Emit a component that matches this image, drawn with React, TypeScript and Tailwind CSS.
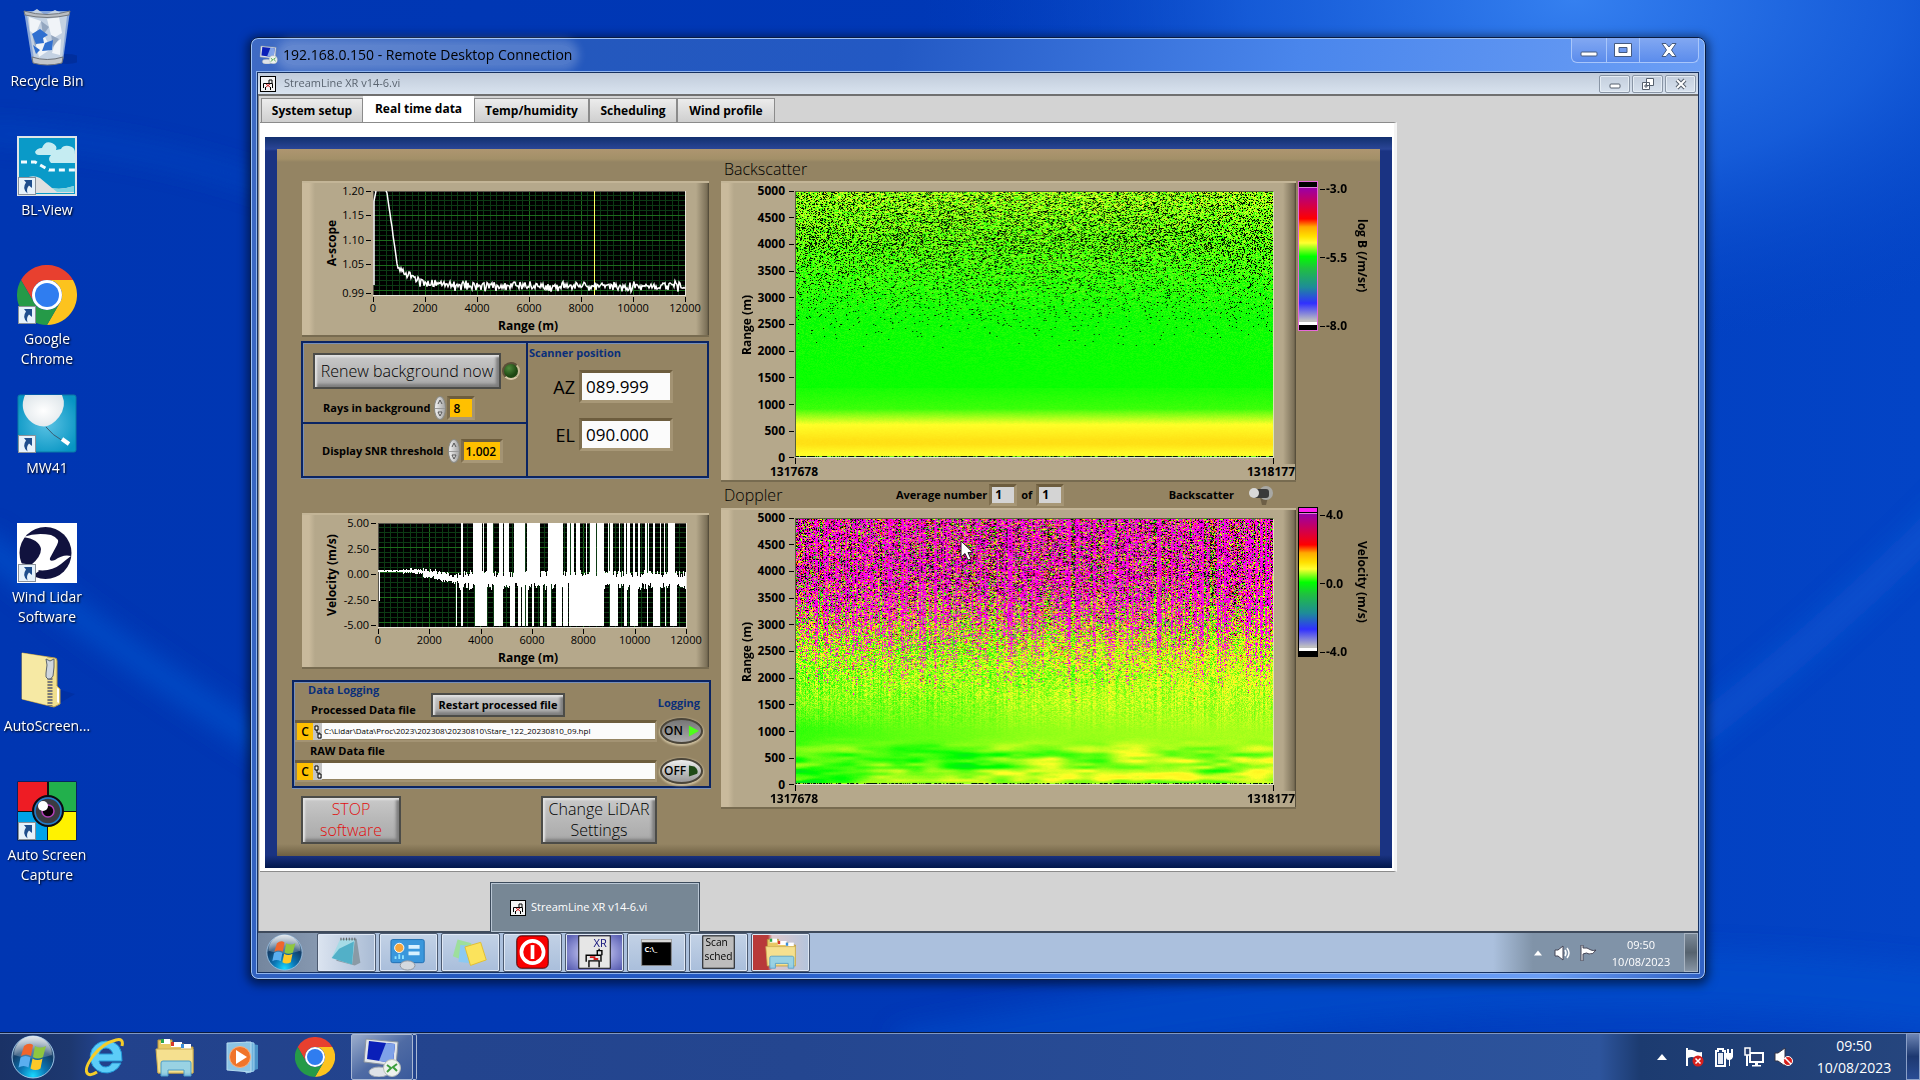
import { useEffect, useRef } from 'react'
import type { ReactNode } from 'react'

const makeRandom = (seed: number) => {
    let s = seed
    return () => {
        s = (s * 1664525 + 1013904223) % 4294967296
        return s / 4294967296
    }
}

type Rgb = [number, number, number]

// 0 = white end of the scale, 1 = purple end
const STOPS: [number, Rgb][] = [
    [0, [190, 190, 190]],
    [0.13, [50, 50, 255]],
    [0.3, [30, 130, 150]],
    [0.48, [0, 255, 0]],
    [0.6, [255, 255, 40]],
    [0.72, [255, 190, 0]],
    [0.8, [255, 0, 0]],
    [1, [150, 0, 170]],
]

const scaleColor = (v: number): Rgb => {
    const t = Math.max(0, Math.min(1, v))
    for (let i = 1; i < STOPS.length; i++) {
        if (t <= STOPS[i][0]) {
            const [a, ca] = STOPS[i - 1]
            const [b, cb] = STOPS[i]
            const f = (t - a) / (b - a)
            return [0, 1, 2].map((k) => ca[k] + (cb[k] - ca[k]) * f) as Rgb
        }
    }
    return STOPS[STOPS.length - 1][1]
}

const ramp = (x: number, a: number, b: number) => Math.max(0, Math.min(1, (x - a) / (b - a)))

const hash = (x: number, y: number) => {
    const n = Math.sin(x * 127.1 + y * 311.7) * 43758.5453
    return n - Math.floor(n)
}

// smooth lattice noise, -0.5 to 0.5
const smooth = (x: number, y: number) => {
    const x0 = Math.floor(x)
    const y0 = Math.floor(y)
    const fx = (x - x0) * (x - x0) * (3 - 2 * (x - x0))
    const fy = (y - y0) * (y - y0) * (3 - 2 * (y - y0))
    const top = hash(x0, y0) * (1 - fx) + hash(x0 + 1, y0) * fx
    const bottom = hash(x0, y0 + 1) * (1 - fx) + hash(x0 + 1, y0 + 1) * fx
    return top * (1 - fy) + bottom * fy - 0.5
}

const backscatterCell = (h: number, rnd: () => number): Rgb => {
    const drop = h > 3900 ? 0.27 - ramp(h, 4300, 5000) * 0.08 : Math.pow(ramp(h, 1900, 4000), 2) * 0.27
    if (rnd() < drop) return [0, 20, 0]
    if (h < 10) return rnd() < 0.6 ? [0, 30, 0] : [120, 255, 30]
    const noise = (rnd() - 0.5) * (0.008 + ramp(h, 1500, 5000) * 0.1)
    if (h < 1300) {
        const body = 0.49 + 0.02 * (1 - ramp(h, 850, 1300)) + 0.09 * (1 - ramp(h, 600, 900)) + 0.055 * (1 - ramp(h, 300, 600)) - 0.05 * (1 - ramp(h, 60, 230))
        return scaleColor(body + noise)
    }
    return scaleColor(0.485 + ramp(h, 2600, 5000) * 0.07 + noise)
}

const dopplerCell = (x: number, h: number, rnd: () => number, column: number): Rgb => {
    if (h < 10) return rnd() < 0.6 ? [0, 30, 0] : [160, 255, 30]
    const noisy = Math.pow(ramp(h + column * 1000, 2000, 3500), 1.3)
    const magenta = Math.max(0.12, Math.min(0.9, 0.52 + column * 0.8))
    const r = rnd()
    if (r < noisy * magenta) return rnd() < 0.88 ? [255, 0, 240] : [190, 0, 140]
    if (r < noisy * 0.94) {
        if (rnd() < 0.42 * ramp(h, 2600, 3900)) return [10, 0, 10]
        return scaleColor(0.4 + rnd() * 0.5)
    }
    const spread = 0.008 + ramp(h, 1000, 2800) * 0.2
    const low = 1 - ramp(h, 450, 900)
    const base = 0.52 + ramp(x, 0, 480) * 0.035 + ramp(h, 1000, 2200) * 0.04
    const cloud = smooth(x / 42, h / 110) * 0.12 + smooth(x / 17, h / 60) * 0.06
    const broad = smooth(x / 130, h / 500) * 0.04
    return scaleColor(base + cloud * low + broad + (rnd() - 0.5) * spread + column * 0.06 * ramp(h, 900, 1900))
}

const HeatMap = ({ kind }: { kind: 'backscatter' | 'doppler' }) => {
    const ref = useRef<HTMLCanvasElement>(null)

    useEffect(() => {
        const ctx = ref.current?.getContext('2d')
        if (!ctx) return
        const w = 476
        const hgt = 265
        const rnd = makeRandom(kind === 'doppler' ? 77 : 12)
        const columns = Array.from({ length: w }, () => rnd() - 0.5)
        const image = ctx.createImageData(w, hgt)
        for (let y = 0; y < hgt; y++) {
            const h = ((hgt - 1 - y) / hgt) * 5000
            for (let x = 0; x < w; x++) {
                const c = kind === 'doppler' ? dopplerCell(x, h, rnd, columns[x]) : backscatterCell(h, rnd)
                const i = (y * w + x) * 4
                image.data[i] = c[0]
                image.data[i + 1] = c[1]
                image.data[i + 2] = c[2]
                image.data[i + 3] = 255
            }
        }
        ctx.putImageData(image, 0, 0)
    }, [kind])

    return <canvas ref={ref} width={476} height={265} className="block h-[265px] w-full min-w-0" />
}

const PANEL =
    'border-t-2 border-b-2 border-t-[#c3b597] border-b-[#776b50] bg-[linear-gradient(to_right,#c9ba9c_0,#c9ba9c_7px,#b5a88b_13px,#b5a88b_calc(100%-13px),#7a6f57_calc(100%-2px),#4b4433_100%)]'

const RANGES = ['5000', '4500', '4000', '3500', '3000', '2500', '2000', '1500', '1000', '500', '0']

const HeatPanel = ({ kind }: { kind: 'backscatter' | 'doppler' }) => (
    <div className={`${PANEL} flex flex-col pt-2`}>
        <div className="flex pr-[22px] pl-4">
            <div className="flex w-5 items-center justify-center">
                <span className="rotate-180 text-xs font-bold whitespace-nowrap [writing-mode:vertical-rl]">Range (m)</span>
            </div>
            <div className="-my-2 flex w-[37px] flex-col justify-between">
                {RANGES.map((r) => (
                    <div key={r} className="flex h-4 items-center justify-end gap-1 text-xs font-bold">
                        {r}
                        <span className="h-px w-[5px] bg-black" />
                    </div>
                ))}
            </div>
            <div className="ml-px min-w-0 flex-1 border border-t-[#55603a] border-r-[#d9e8b0] border-b-[#e8e4d0] border-l-[#55603a]">
                <HeatMap kind={kind} />
            </div>
        </div>
        <div className="flex justify-between pr-[22px] pl-[74px]">
            <span className="h-[6px] w-px bg-black" />
            <span className="h-[6px] w-px bg-black" />
        </div>
        <div className="flex h-4 justify-between pr-px pl-[49px] text-xs leading-4 font-bold">
            <span>1317678</span>
            <span className="bg-[#b5a88b]">1318177</span>
        </div>
    </div>
)

const Grid = ({ x, y, w, h }: { x: number; y: number; w: number; h: number }) => (
    <g shapeRendering="crispEdges">
        <rect x={x} y={y} width={w} height={h} fill="#000" />
        {Array.from({ length: 48 }, (_, i) => (
            <path key={`v${i}`} d={`M${x + (i * w) / 48} ${y}v${h}`} stroke={i % 8 === 0 ? '#1c6a1c' : '#0c3a14'} />
        ))}
        {Array.from({ length: 21 }, (_, i) => (
            <path key={`h${i}`} d={`M${x} ${y + (i * h) / 21}h${w}`} stroke={i % 5 === 0 ? '#1c6a1c' : '#0c3a14'} />
        ))}
        <path d={`M${x} ${y + h}V${y}h${w}`} fill="none" stroke="#55524a" />
        <path d={`M${x} ${y + h}h${w}V${y}`} fill="none" stroke="#e8e4d8" />
    </g>
)

const aScopePath = () => {
    const rnd = makeRandom(5)
    let d = 'M72 104V20L74 10M84 10'
    for (let i = 0; i < 299; i++) {
        const x = 85 + i
        let y = 105
        if (i < 11) y = 12 + i * 7
        else if (i < 60) y = 105 - 20 * Math.exp(-(i - 11) / 15)
        d += `L${x} ${(y + (rnd() + rnd() - 1) * (i < 11 ? 2 : 6)).toFixed(1)}`
    }
    return d
}

const velocityPath = () => {
    const rnd = makeRandom(23)
    let d = ''
    let up = false
    let down = false
    for (let i = 0; i < 308; i++) {
        const x = 76.5 + i
        const mid = i < 40 ? 58 : i < 80 ? 58 + (i - 40) * 0.22 : 67
        const amp = i < 25 ? 1 : i < 45 ? 2 : i < 80 ? 4 : 7
        let top = mid - amp * (0.4 + rnd())
        let bottom = mid + amp * (0.4 + rnd())
        if (i === 1) bottom = 88
        if (i === 78) bottom = 113
        if (i === 83 || i === 84) {
            top = 10
            bottom = 113
        }
        if (i > 92 && i < 302) {
            if (rnd() < 0.5) up = rnd() < (i > 235 ? 0.48 : 0.64)
            if (rnd() < 0.5) down = rnd() < (i > 235 ? 0.45 : 0.6)
            if (up) top = 10
            if (down) bottom = 113
        }
        if (i > 190 && i < 226) bottom = 113
        if (i > 96 && i < 104) {
            top = 10
            bottom = 113
        }
        d += `M${x} ${Math.round(top)}V${Math.round(bottom)}`
    }
    return d
}

const XTICKS = ['0', '2000', '4000', '6000', '8000', '10000', '12000']

const LineChart = ({ title, labels, plotX, plotW, children }: { title: string; labels: [string, number][]; plotX: number; plotW: number; children: ReactNode }) => (
    <div className={`${PANEL} h-[156px]`}>
        <svg viewBox="0 2 407 152" className="block h-[152px] w-full" fontSize="11">
            <Grid x={plotX} y={10} w={plotW} h={104} />
            {children}
            {labels.map(([text, y]) => (
                <g key={text}>
                    <text x={plotX - 9} y={y + 4} textAnchor="end">{text}</text>
                    <path d={`M${plotX - 7} ${y + 0.5}h5`} stroke="#000" />
                </g>
            ))}
            {XTICKS.map((t, i) => (
                <g key={t}>
                    <text x={plotX + (i * plotW) / 6} y="131" textAnchor="middle">{t}</text>
                    <path d={`M${Math.round(plotX + (i * plotW) / 6) + 0.5} 116v5`} stroke="#000" />
                </g>
            ))}
            <text x="226" y="149" textAnchor="middle" fontWeight="700" fontSize="12">Range (m)</text>
            <text transform="translate(34 62) rotate(-90)" textAnchor="middle" fontWeight="700" fontSize="12">{title}</text>
        </svg>
    </div>
)

const Well = ({ children, className = '' }: { children: ReactNode; className?: string }) => (
    <div className={`border-3 border-t-[#6d5d3e] border-r-[#a39373] border-b-[#a89877] border-l-[#7d6d4d] ${className}`}>{children}</div>
)

const BOX = 'border-2 border-[#0a2463] shadow-[inset_1px_1px_0_#7890b8,0_1px_0_#7890b8]'

const STEEL =
    'border-2 border-[#4c4c48] bg-[linear-gradient(#c9c9c9,#b9b9b9_45%,#a9a9a9)] shadow-[inset_2px_2px_2px_#e2e2e2,inset_-3px_-3px_3px_#7e7e7e]'

const Spinner = ({ name }: { name: string }) => (
    <span className="flex h-6 w-3 flex-col overflow-hidden rounded-[50%] border border-[#8b8b85] bg-linear-to-r from-[#f2f2f2] to-[#a5a5a5]">
        <button aria-label={`Increase ${name}`} className="flex flex-1 items-center justify-center border-b border-[#999]">
            <svg viewBox="0 0 6 6" className="h-[6px] w-[6px]"><path d="M1 5L3 1L5 5" fill="none" stroke="#555" /></svg>
        </button>
        <button aria-label={`Decrease ${name}`} className="flex flex-1 items-center justify-center">
            <svg viewBox="0 0 6 6" className="h-[6px] w-[6px]"><path d="M1 1L3 5L5 1Z" fill="#eee" stroke="#555" /></svg>
        </button>
    </span>
)

const ColorBar = ({ unit, labels, frame, over }: { unit: string; labels: string[]; frame: string; over: string }) => (
    <div className="flex h-[150px]">
        <div className={`flex w-5 flex-col border bg-black ${frame}`}>
            <div className={`mb-px h-1 ${over}`} />
            <div className="flex-1 border-t border-[#e080d8] bg-[linear-gradient(#9a00a8_0,#d00050_12%,#ff0000_23%,#ffa800_29%,#ffe000_36%,#ffff30_41%,#00ff00_51%,#20c040_60%,#1e8c98_74%,#3030ff_86%,#c0c0c0_99%)]" />
            <div className="h-[3px] bg-white" />
            <div className="h-[5px] bg-black" />
        </div>
        <div className="-mb-[3px] flex w-8 flex-col justify-between text-xs leading-4 font-bold">
            {labels.map((l) => (
                <div key={l} className="flex items-center gap-px pl-[2px]">
                    <span className="h-px w-[5px] shrink-0 bg-black" />
                    {l}
                </div>
            ))}
        </div>
        <div className="flex w-6 items-center justify-center">
            <span className="text-xs font-bold whitespace-nowrap [writing-mode:vertical-rl]">{unit}</span>
        </div>
    </div>
)

const PathRow = ({ label, value, on }: { label: string; value: string; on: boolean }) => (
    <div className="flex items-center gap-[3px]">
        <div className="flex h-[22px] min-w-0 flex-1 border-t-3 border-r-2 border-b-2 border-t-[#6d5d3e] border-r-[#a39373] border-b-[#a39373] pl-[2px]">
            <span className="flex w-4 items-center justify-center bg-[#ffc000] text-xs leading-4 font-semibold">C</span>
            <svg viewBox="0 0 9 17" className="h-[17px] w-[9px] bg-[#c4c4c4]">
                <path d="M2 3h3v4h-3zM5 11h3v4h-3zM4 7v3h3" fill="#fff" stroke="#000" />
            </svg>
            <input aria-label={label} defaultValue={value} className="h-4 min-w-0 flex-1 bg-[#fbfbfb] px-[2px] text-[8px] leading-4 font-medium outline-none" />
        </div>
        <button
            aria-label={`${label} logging`}
            className={`flex h-[26px] w-[43px] items-center justify-between rounded-[50%] border-2 border-[#4a453a] px-[2px] text-xs font-semibold shadow-[0_1px_2px_1px_#cbbd9d] ${on ? 'bg-linear-to-b from-[#777] to-[#aaa]' : 'bg-linear-to-b from-[#eee] to-[#999]'}`}
        >
            {on ? 'ON' : 'OFF'}
            <svg viewBox="0 0 12 14" className="h-[14px] w-[11px]">
                {on ? <path d="M1 1L12 7L1 13Z" fill="#4dff1a" /> : <path d="M1 1L7 2Q12 6 10 10L1 13Z" fill="#1f4a17" />}
            </svg>
        </button>
    </div>
)

const ViIcon = () => (
    <svg viewBox="0 0 16 16" className="h-4 w-4 shrink-0">
        <rect x=".5" y=".5" width="15" height="15" fill="#f4f4f4" stroke="#000" />
        <path d="M3.500 12V7.500h9V12M5.500 14v-3M10.500 14v-3M9 7V4h3v3" fill="none" stroke="#000" />
        <path d="M6 8l4 3M10 8l-4 3" stroke="#d02020" />
    </svg>
)

const ChromeDisc = () => (
    <g>
        <path d="M30 15H56A30 30 0 0 0 4 15L17 37.500A15 15 0 0 1 30 15Z" fill="#e8402f" />
        <path d="M56 15A30 30 0 0 1 30 60L43 37.500A15 15 0 0 0 30 15Z" fill="#fcc31e" />
        <path d="M4 15A30 30 0 0 0 30 60L43 37.500A15 15 0 0 1 17 37.500Z" fill="#259a48" />
        <circle cx="30" cy="30" r="15" fill="#fff" />
        <circle cx="30" cy="30" r="12" fill="#2f7df0" />
    </g>
)

const Orb = ({ className }: { className: string }) => (
    <svg viewBox="0 0 44 44" className={className}>
        <defs>
            <radialGradient id="orb" cx=".5" cy=".95" r=".9">
                <stop offset="0" stopColor="#18d8ff" />
                <stop offset=".35" stopColor="#0b75b4" />
                <stop offset=".7" stopColor="#123d68" />
                <stop offset="1" stopColor="#7d93a8" />
            </radialGradient>
            <linearGradient id="gloss" x1="0" y1="0" x2="0" y2="1">
                <stop offset="0" stopColor="#fff" stopOpacity=".75" />
                <stop offset="1" stopColor="#fff" stopOpacity=".15" />
            </linearGradient>
        </defs>
        <circle cx="22" cy="22" r="21" fill="url(#orb)" stroke="#9cc4e6" />
        <path d="M3 20A19 19 0 0 1 41 20Q22 27 3 20Z" fill="url(#gloss)" />
        <path d="M13 11q5-4 9-1l-2 11q-5-3-10 0Z" fill="#f0652b" />
        <path d="M24 11q5 3 11 0l-3 11q-5 3-10 0Z" fill="#8fc640" />
        <path d="M9.500 22.500q5-3 10 0l-2 10q-5-3-10 0Z" fill="#5aaef0" />
        <path d="M21.500 23.500q5 3 10 0l-2 10q-5 3-10 0Z" fill="#fdc928" />
    </svg>
)

const FolderIcon = ({ className }: { className: string }) => (
    <svg viewBox="0 0 40 40" className={className}>
        <path d="M3 3h14v4h12v3h9v26H3Z" fill="#e8c964" stroke="#b8963c" />
        <path d="M6 2h9v5H6z" fill="#fff" /><path d="M16 5h11v5H16z" fill="#fff" /><path d="M26 7h10v5H26z" fill="#fff" />
        <path d="M6 2h3v4H6z" fill="#2ba54a" /><path d="M16 5h3v4h-3z" fill="#d8382a" /><path d="M26 7h3v4h-3z" fill="#3c8ed8" />
        <path d="M1 12h37v24H3Z" fill="#f5e08f" stroke="#cdae54" />
        <path d="M6 39V26q0-2 2-2h26q2 0 2 2v13h-7v-6H13v6Z" fill="#8fd0ec" fillOpacity=".9" stroke="#4c9cc8" />
    </svg>
)

const Shortcut = () => (
    <g>
        <rect x="1.500" y="41.500" width="17" height="17" fill="#e6f2fb" stroke="#8a929a" />
        <path d="M7 44h8v8l-3-2.500q-3 3-1.500 8-6-5-1.500-11Z" fill="#1f4e8c" />
    </g>
)

const desktopIcons: { label: string; icon: ReactNode }[] = [
    {
        label: 'Recycle Bin',
        icon: (
            <>
                <ellipse cx="50" cy="52" rx="14" ry="5" fill="#002a90" opacity=".6" />
                <path d="M7 4H53L46 54Q30 60 15 54Z" fill="#9fb8de" fillOpacity=".85" />
                <path d="M10 8l10-6 8 6 10-5 12 6-5 44-12 3-16-4Z" fill="#c3d1e2" />
                <path d="M12 10l12 4-6 14-5-4ZM30 12l12-2 3 16-10 6ZM18 34l10-4 6 12-12 8ZM38 36l6-4-1 16-8-2Z" fill="#f0f4f8" />
                <path d="M24 14l8 6-6 8ZM34 28l8 4-6 8ZM16 30l6 2-4 8Z" fill="#93a6bf" />
                <path d="M15 27l8-5 8 6-5 3 1 5-8 1ZM28 36l8-3-1 10-10 1ZM16 38l7 5-4 4Z" fill="#2f6fd0" />
                <path d="M7 4Q30 11 53 4L52 8Q30 13 8 8Z" fill="#b9bdc2" stroke="#72777d" />
                <path d="M15 50Q30 55 46 50L45 56Q30 60 16 56Z" fill="#c2c5c9" stroke="#6f747a" />
            </>
        ),
    },
    {
        label: 'BL-View',
        icon: (
            <>
                <rect width="60" height="60" fill="#dfe5e8" />
                <rect x="2" y="2" width="56" height="56" fill="#0a9ac8" />
                <path d="M18 16q2-4 7-4 3-8 10-5 6 3 4 7l5-1q2-4 8-3 7 1 6 9v8H34q-4-4 0-8H22q-4 0-4-4Z" fill="#c5ecf2" />
                <path d="M4 26H18L32 34H58" fill="none" stroke="#f2fbff" strokeWidth="3" strokeDasharray="6 4" />
                <path d="M3 50q8-14 20-8l12 10q10 2 22-2v7H3Z" fill="#e0e0e0" />
                <path d="M35 52q10 2 22-2v6H40Z" fill="#7fd4e2" />
                <Shortcut />
            </>
        ),
    },
    {
        label: 'Google Chrome',
        icon: (
            <>
                <ChromeDisc />
                <Shortcut />
            </>
        ),
    },
    {
        label: 'MW41',
        icon: (
            <>
                <defs>
                    <radialGradient id="sky" cx=".5" cy=".5" r=".6">
                        <stop offset="0" stopColor="#5cc3e4" />
                        <stop offset="1" stopColor="#0795c3" />
                    </radialGradient>
                    <radialGradient id="balloon" cx=".5" cy=".5" r=".6">
                        <stop offset="0" stopColor="#ffffff" />
                        <stop offset="1" stopColor="#dfe6ea" />
                    </radialGradient>
                </defs>
                <rect x="1" y="1" width="58" height="57" rx="2" fill="url(#sky)" stroke="#0a7aa5" />
                <path d="M8 1H45Q50 12 42 23 35 32 27 32.500 18 32 12 26 2 15 8 1Z" fill="url(#balloon)" />
                <path d="M29 33q6 8 17 14" fill="none" stroke="#3a5a70" />
                <path d="M45 45l7 5" stroke="#fff" strokeWidth="4" />
                <Shortcut />
            </>
        ),
    },
    {
        label: 'Wind Lidar Software',
        icon: (
            <>
                <rect width="60" height="60" fill="#fff" />
                <circle cx="28.500" cy="30" r="26" fill="#11123e" />
                <path d="M6 14Q20 9 34 12 44 16 40 22L33 35Q32 39 38 37 46 31 54 33 50 36 44 41 34 49 20 47L14 42Q24 34 24 26 22 16 6 14Z" fill="#fff" />
                <path d="M2 40l14 2 6 6-8 6Z" fill="#fff" />
                <Shortcut />
            </>
        ),
    },
    {
        label: 'AutoScreen...',
        icon: (
            <>
                <path d="M38 54l20-12-14-4Z" fill="#0030a0" opacity=".8" />
                <path d="M5 1L38 6Q40 6 40 9V34L43 37V52L37 55 5 47Z" fill="#f0df8e" stroke="#b79b4c" />
                <path d="M5 1L30 5V53L5 47Z" fill="#f6e9a4" />
                <path d="M40 36v14l2 1V37Z" fill="#fff" />
                <path d="M33 26V54" stroke="#7a7a78" strokeWidth="5" strokeDasharray="2 1" />
                <path d="M29 7l4 2 4-2v8l-1 9q-2 4-5 3-3-1-2-6l1-8Z" fill="#cfd6dd" stroke="#5e666e" />
            </>
        ),
    },
    {
        label: 'Auto Screen Capture',
        icon: (
            <>
                <rect x=".5" y=".5" width="59" height="59" fill="#111" />
                <path d="M1 1h29v29H1z" fill="#ee1c24" /><path d="M32 1h27v29H32z" fill="#22b04c" />
                <path d="M1 31h29v28H1z" fill="#00a2e8" /><path d="M31 31h28v28H31z" fill="#fff200" />
                <circle cx="31" cy="30" r="15" fill="#3b3b42" stroke="#0b0b14" strokeWidth="2" />
                <circle cx="31" cy="30" r="13" fill="none" stroke="#1f7fd0" strokeWidth="1.500" />
                <circle cx="31" cy="30" r="6" fill="#0a0008" stroke="#b340b8" strokeWidth="1.500" />
                <circle cx="26" cy="25" r="5" fill="#fff" />
                <Shortcut />
            </>
        ),
    },
]

const RdpIcon = ({ className }: { className: string }) => (
    <svg viewBox="0 0 40 40" className={className}>
        <path d="M4 2L36 5 34 29 2 25Z" fill="#e2e6ea" stroke="#8b949e" />
        <path d="M7 4L33 7 31 26 5 22Z" fill="#0a1fb8" />
        <path d="M24 6L33 7 31 26 17 24Z" fill="#7fa2e8" />
        <ellipse cx="17" cy="35" rx="10" ry="5" fill="#dfe3e8" stroke="#a0a8b0" />
        <circle cx="30" cy="31" r="8.500" fill="#eef2ee" stroke="#b8bfb8" />
        <path d="M25 28l4 3-4 4M35 27l-4 3 4 4" fill="none" stroke="#3c9e3c" strokeWidth="2" />
    </svg>
)

const remoteApps: { name: string; look: string; icon: ReactNode }[] = [
    {
        name: 'Notepad',
        look: 'bg-linear-to-r from-[#dbe4f0] to-[#a9bbd4]',
        icon: (
            <>
                <path d="M14 5h17l4 26-6 3-20-5Z" fill="#8a9aa5" />
                <path d="M13 6h16l-3 27-22-7Z" fill="#a6dbe6" />
                <path d="M12 16l16-8-2 25-22-7Z" fill="#52b0c8" />
                <path d="M14 4v3M17 4v3M20 4v3M23 4v3M26 4v3M29 4v3" stroke="#555" />
            </>
        ),
    },
    {
        name: 'Control Panel',
        look: 'bg-linear-to-b from-[#c3d2e6] to-[#a9bedb]',
        icon: (
            <>
                <rect x="1" y="6" width="36" height="25" rx="2" fill="#3a97dc" stroke="#1d6db0" />
                <circle cx="10" cy="15" r="5" fill="#f5a53a" stroke="#fff" />
                <path d="M20 12h12v4H20zM20 19h12v4H20z" fill="#d8f1ff" />
                <path d="M6 27v-3M10 27v-5M14 27v-4" stroke="#8fe3ff" strokeWidth="2" />
                <ellipse cx="19" cy="34" rx="8" ry="5" fill="#d5d9de" stroke="#8d949c" />
            </>
        ),
    },
    {
        name: 'Sticky Notes',
        look: 'bg-linear-to-b from-[#c3d2e6] to-[#a9bedb]',
        icon: (
            <>
                <path d="M6 6l15 4-5 20L1 24Z" fill="#9ddf9b" />
                <path d="M9 12l14 1-2 19-14-2Z" fill="#8cc9f2" />
                <path d="M14 14l17-5 6 19-17 6Z" fill="#fbe35c" stroke="#e0bd30" />
            </>
        ),
    },
    {
        name: 'Power',
        look: 'bg-linear-to-b from-[#c3d2e6] to-[#a9bedb]',
        icon: (
            <>
                <rect x="3" y="2" width="34" height="35" rx="5" fill="#f80000" stroke="#3a0000" />
                <circle cx="20" cy="19.500" r="12" fill="none" stroke="#fff" strokeWidth="4" />
                <path d="M20 12v15" stroke="#fff" strokeWidth="4" />
            </>
        ),
    },
    {
        name: 'StreamLine XR',
        look: 'bg-[radial-gradient(#f0f0ff,#8f93d4_55%,#4a50a8)]',
        icon: (
            <>
                <rect x="3" y="2" width="34" height="35" fill="#e6e6e6" stroke="#000" />
                <text x="19" y="14" fontSize="12" fill="#10107a">XR</text>
                <path d="M11 30V23h16v7M14 36V29h11v7M23 23v-5h5v5M25 18v-2" fill="none" stroke="#000" strokeWidth="1.500" />
                <path d="M15 25h5v2h4" fill="none" stroke="#d01818" strokeWidth="2" />
            </>
        ),
    },
    {
        name: 'Command Prompt',
        look: 'bg-linear-to-b from-[#c3d2e6] to-[#a9bedb]',
        icon: (
            <>
                <rect x="4" y="6" width="32" height="28" fill="#000" stroke="#888" />
                <path d="M4 6h32v3H4z" fill="#d8d8d8" />
                <text x="7" y="19" fontSize="8" fontWeight="700" fill="#fff">C:\_</text>
            </>
        ),
    },
    {
        name: 'Scan sched',
        look: 'bg-linear-to-b from-[#c3d2e6] to-[#a9bedb]',
        icon: (
            <>
                <rect x="3" y="2" width="34" height="35" fill="#bdbdbd" stroke="#000" />
                <text x="6" y="13" fontSize="11">Scan</text>
                <text x="5" y="28" fontSize="11">sched</text>
            </>
        ),
    },
]

const REMOTE_BUTTON = 'flex h-[39px] w-[59px] items-center justify-center rounded-xs border border-[#4c5a70] shadow-[inset_0_0_0_1px_#dfe8f5]'

const tabs = ['System setup', 'Real time data', 'Temp/humidity', 'Scheduling', 'Wind profile']

const Scanner = ({ name, value }: { name: string; value: string }) => (
    <label className="flex items-center justify-end gap-1 text-lg leading-6">
        {name}
        <Well className="w-[94px]">
            <input defaultValue={value} className="block h-[27px] w-full bg-[#fbfbfb] pl-1 text-[17px] leading-6 outline-none" />
        </Well>
    </label>
)

const LeftColumn = () => (
    <div className="flex w-[419px] shrink-0 flex-col">
        <div className="flex flex-col pr-[2px] pl-[10px]">
            <LineChart title="A-scope" plotX={71} plotW={312} labels={[['1.20', 10], ['1.15', 34], ['1.10', 59], ['1.05', 83], ['0.99', 112]]}>
                <path d="M292.500 10v104" stroke="#ffff60" />
                <path d={aScopePath()} fill="none" stroke="#fff" strokeWidth="1.500" />
            </LineChart>
            <div className={`${BOX} mt-1 -ml-px flex h-[137px]`}>
                <div className="flex w-[225px] flex-col border-r-2 border-[#0a2463]">
                    <div className="flex h-[81px] flex-col gap-[7px] border-b-2 border-[#0a2463] pt-[10px] pl-[10px]">
                        <div className="flex items-center">
                            <button className={`${STEEL} h-9 w-[188px] text-base font-light whitespace-nowrap`}>Renew background now</button>
                            <span className="ml-px h-[18px] w-[18px] rounded-full border-2 border-t-[#5c5038] border-r-[#c9bb98] border-b-[#d8caa8] border-l-[#5c5038] bg-[radial-gradient(circle_at_35%_30%,#4f8a3c,#1d4712_60%)]" />
                        </div>
                        <div className="flex items-center gap-1 pl-[10px] text-[11px] font-bold">
                            <label htmlFor="rays">Rays in background</label>
                            <Spinner name="rays" />
                            <Well className="-ml-[3px]">
                                <input id="rays" defaultValue="8" className="block h-[18px] w-[22px] bg-[#ffc000] pl-[3px] text-xs leading-4 font-semibold outline-none" />
                            </Well>
                        </div>
                    </div>
                    <div className="flex items-center gap-1 pt-[15px] pl-[19px] text-[11px] font-bold">
                        <label htmlFor="snr">Display SNR threshold</label>
                        <Spinner name="threshold" />
                        <Well className="-ml-[3px]">
                            <input id="snr" defaultValue="1.002" className="block h-[18px] w-[36px] bg-[#ffc000] pl-[2px] text-xs leading-4 font-semibold outline-none" />
                        </Well>
                    </div>
                </div>
                <div className="flex flex-1 flex-col pr-[34px] pl-px">
                    <h3 className="pt-[2px] text-[11px] leading-4 font-bold text-[#0a2f7a]">Scanner position</h3>
                    <div className="flex flex-col gap-[15px] pt-[9px]">
                        <Scanner name="AZ" value="089.999" />
                        <Scanner name="EL" value="090.000" />
                    </div>
                </div>
            </div>
            <div className="mt-[35px]">
                <LineChart title="Velocity (m/s)" plotX={76} plotW={308} labels={[['5.00', 10], ['2.50', 36], ['0.00', 61], ['-2.50', 87], ['-5.00', 112]]}>
                    <path d={velocityPath()} stroke="#fff" shapeRendering="crispEdges" />
                </LineChart>
            </div>
        </div>
        <div className={`${BOX} mt-[11px] flex h-[108px] flex-col pr-[6px] pl-px text-[11px] font-bold`}>
            <div className="flex h-[36px]">
                <div className="flex w-[136px] flex-col pl-[13px]">
                    <h3 className="leading-4 text-[#0a2f7a]">Data Logging</h3>
                    <span className="pt-1 pl-[3px] leading-4">Processed Data file</span>
                </div>
                <button className={`${STEEL} mt-[11px] h-6 w-[134px] whitespace-nowrap`}>Restart processed file</button>
                <span className="mt-[13px] ml-auto pr-[3px] leading-4 text-[#0a2f7a]">Logging</span>
            </div>
            <PathRow label="Processed Data file" value="C:\Lidar\Data\Proc\2023\202308\20230810\Stare_122_20230810_09.hpl" on />
            <span className="pl-[15px] leading-[14px]">RAW Data file</span>
            <PathRow label="RAW Data file" value="" on={false} />
        </div>
        <div className="mt-2 flex items-start justify-between pr-[54px] pl-[9px]">
            <button className={`${STEEL} h-12 w-[100px] text-base leading-[21px] font-light text-[#e01010]`}>STOP<br />software</button>
            <button className={`${STEEL} h-12 w-[116px] text-base leading-[21px] font-light`}>Change LiDAR<br />Settings</button>
        </div>
    </div>
)

const Count = ({ name }: { name: string }) => (
    <Well>
        <input aria-label={name} defaultValue="1" className="block h-4 w-[22px] bg-[#d4d4d4] pl-[3px] text-xs leading-4 outline-none" />
    </Well>
)

const RightColumn = () => (
    <div className="flex min-w-0 flex-1 flex-col">
        <h2 className="-mt-6 h-6 pl-[3px] text-base leading-6 font-light">Backscatter</h2>
        <div className="flex gap-[2px]">
            <div className="flex min-w-0 flex-1 flex-col">
                <HeatPanel kind="backscatter" />
                <div className="flex h-[26px] items-center pl-[3px] text-[11px] font-bold">
                    <h2 className="w-[172px] text-base font-light">Doppler</h2>
                    <span className="mr-[2px]">Average number</span>
                    <Count name="Average number" />
                    <span className="mx-1">of</span>
                    <Count name="Average total" />
                    <span className="flex-1" />
                    <label htmlFor="mode" className="mr-[14px]">Backscatter</label>
                    <button id="mode" role="switch" aria-checked="false" className="mr-[22px]">
                        <svg viewBox="0 0 26 20" className="h-5 w-[26px]">
                            <path d="M12 12l8 0-2 8h-4Z" fill="#5c503a" opacity=".7" />
                            <circle cx="18" cy="8" r="7" fill="#a8a8a4" />
                            <rect x="4" y="4" width="17" height="9" rx="3" fill="#3a3a3a" />
                            <circle cx="6" cy="8" r="5" fill="#d8d8d8" />
                        </svg>
                    </button>
                </div>
                <HeatPanel kind="doppler" />
            </div>
            <div className="flex w-[82px] shrink-0 flex-col gap-[176px]">
                <ColorBar unit="log B (/m/sr)" labels={['-3.0', '-5.5', '-8.0']} frame="border-[#e868dc]" over="bg-black" />
                <ColorBar unit="Velocity (m/s)" labels={['4.0', '0.0', '-4.0']} frame="border-black" over="bg-[#ff20f0]" />
            </div>
        </div>
    </div>
)

const SMALL_BUTTON = 'flex h-[18px] w-[31px] items-center justify-center rounded-xs border border-[#8995a5] shadow-[inset_0_0_0_1px_#e4ecf4]'

const RemoteSession = () => (
    <div className="flex min-h-0 flex-1 flex-col border border-[#16305f] bg-[#d3d3d3] outline outline-[#8fb4ee]">
        <div className="flex h-[23px] shrink-0 items-center border-b-2 border-[#707070] bg-linear-to-b from-[#c0cbda] to-[#d9e3ef] pr-[2px] pl-[2px] text-[11px] text-[#5a6470]">
            <ViIcon />
            <span className="ml-2 flex-1">StreamLine XR v14-6.vi</span>
            <div className="flex gap-[2px]">
                <button aria-label="Minimize child" className={SMALL_BUTTON}>
                    <svg viewBox="0 0 12 12" className="h-3 w-3"><rect x="1" y="6" width="10" height="4" rx="1" fill="#fff" stroke="#555f6c" /></svg>
                </button>
                <button aria-label="Restore child" className={SMALL_BUTTON}>
                    <svg viewBox="0 0 12 12" className="h-3 w-3"><path d="M4.500.5h7v7h-7zM.5 4.500h7v7h-7zM3 7h2v2H3z" fill="#fff" stroke="#555f6c" /></svg>
                </button>
                <button aria-label="Close child" className={SMALL_BUTTON}>
                    <svg viewBox="0 0 12 12" className="h-3 w-3"><path d="M2 2l8 8M10 2l-8 8" stroke="#555f6c" strokeWidth="4" /><path d="M2 2l8 8M10 2l-8 8" stroke="#fff" strokeWidth="2" /></svg>
                </button>
            </div>
        </div>
        <div className="flex min-h-0 flex-1 flex-col overflow-hidden border-l border-[#888] pt-px pl-px">
            <div role="tablist" className="flex h-[25px] shrink-0 items-end text-xs font-bold whitespace-nowrap">
                {tabs.map((tab, i) => (
                    <button
                        key={tab}
                        role="tab"
                        aria-selected={i === 1}
                        className={
                            i === 1
                                ? 'h-[26px] w-[111px] bg-white pb-px'
                                : `h-6 border border-b-0 border-[#8b8b8b] bg-linear-to-b from-[#ececec] to-[#cfcfcf] px-2 ${i === 0 ? 'ml-px w-[102px]' : i === 2 ? 'w-[115px]' : i === 3 ? 'w-[88px]' : 'w-[98px]'}`
                        }
                    >
                        {tab}
                    </button>
                ))}
            </div>
            <div className="w-full max-w-[1137px] border-t border-r-3 border-b border-[#8b8b8b] border-r-[#f4f4f4] bg-white pt-[14px] pr-[2px] pb-[3px] pl-[5px]">
                <div className="bg-[linear-gradient(#12306f,#2a4596_12px,#1a3382_14px,#1a3382_calc(100%-13px),#02184c)] p-3">
                    <div className="flex bg-[linear-gradient(#ae9570_0,#a39068_10px,#948463_13px,#948463_calc(100%-12px),#6d5f42)] pt-8 pb-3 pl-[15px]">
                        <LeftColumn />
                        <div className="w-[10px] shrink-0" />
                        <RightColumn />
                    </div>
                </div>
            </div>
        </div>
        <div className="relative flex h-[41px] shrink-0 items-center border-t-2 border-t-[#3f4b5c] bg-[linear-gradient(to_right,#74869e_0,#8698b0_60px,#abc0dd_62px,#abc0dd_1235px,#8093a8_1275px)] text-xs text-white">
            <div className="absolute bottom-full left-[232px] flex h-[51px] w-[210px] items-center gap-[5px] border border-[#3c4b5c] bg-[#778795] pl-[19px] text-[11px] shadow-[inset_0_0_0_1px_#b9c6d4]">
                <ViIcon />
                <span>StreamLine XR v14-6.vi</span>
            </div>
            <button aria-label="Remote start" className="mr-[14px] ml-2"><Orb className="h-[37px] w-[37px]" /></button>
            <div className="flex gap-[3px]">
                {remoteApps.map((app) => (
                    <button key={app.name} aria-label={app.name} className={`${REMOTE_BUTTON} ${app.look}`}>
                        <svg viewBox="0 0 40 40" className="h-[37px] w-[37px]">{app.icon}</svg>
                    </button>
                ))}
                <button aria-label="Explorer" className={`${REMOTE_BUTTON} bg-[linear-gradient(to_right,#b83a3a_0,#b83a3a_16px,#dfc8cc_20px,#b3c4dc)]`}>
                    <FolderIcon className="h-8 w-8" />
                </button>
            </div>
            <span className="flex-1" />
            <div className="flex items-center gap-2">
                <svg viewBox="0 0 10 6" className="mr-1 h-[6px] w-2"><path d="M0 6L5 0L10 6Z" fill="#fff" /></svg>
                <svg viewBox="0 0 18 16" className="h-4 w-[18px]">
                    <path d="M1 5h3l5-4v14l-5-4H1z" fill="#fff" stroke="#445" /><path d="M11 5q2 3 0 6M13 3q4 5 0 10" fill="none" stroke="#fff" strokeWidth="1.500" />
                </svg>
                <svg viewBox="0 0 18 16" className="h-4 w-[18px]"><path d="M1 0v16h2V9q4-2 6 0 4 1 7-4-3 1-5 0-4-3-8-2V0Z" fill="#fff" stroke="#445" /></svg>
            </div>
            <div className="w-[86px] text-center text-[11px] leading-[17px]">09:50<br />10/08/2023</div>
            <button aria-label="Show remote desktop" className="h-full w-[14px] border border-[#a8b4c2] bg-linear-to-b from-[#7c8a99] via-[#56636f] to-[#8795a5]" />
        </div>
    </div>
)

const TITLE_BUTTON = 'flex h-[25px] items-center justify-center border border-t-0 border-[#a8c6fb] bg-linear-to-b from-[#82a8f2] to-[#5b8cec]'

const RemoteWindow = () => (
    <div className="absolute top-[37px] right-[214px] bottom-[52px] left-[250px] flex flex-col rounded-lg border border-[#0a1c40] bg-[linear-gradient(100deg,#3f6bc4_0,#2458bd_20%,#2359c4_40%,#4a86ec_65%,#6b9ef5_90%,#2f60c4)] px-[6px] pb-[6px] shadow-[inset_0_0_0_1px_#9dc1f5,0_2px_10px_3px_rgba(0,0,0,0.5)]">
        <div className="flex h-[34px] shrink-0 items-start">
            <RdpIcon className="mt-[7px] ml-[2px] h-[19px] w-[19px]" />
            <h1 className="mt-[7px] ml-1 rounded-full bg-white/20 px-px text-sm leading-5 shadow-[0_0_8px_6px_rgba(255,255,255,0.2)]">192.168.0.150 - Remote Desktop Connection</h1>
            <div className="ml-auto flex">
                <button aria-label="Minimize" className={`${TITLE_BUTTON} w-9 rounded-bl-md`}>
                    <svg viewBox="0 0 18 16" className="h-4 w-[18px]"><rect x="1" y="10" width="16" height="4" rx="1" fill="#fff" stroke="#445a80" /></svg>
                </button>
                <button aria-label="Maximize" className={`${TITLE_BUTTON} w-[33px] border-l-0`}>
                    <svg viewBox="0 0 18 16" className="h-4 w-[18px]"><path d="M.5 1.500h17v13H.5zM5 5.500v5h8v-5z" fillRule="evenodd" fill="#fff" stroke="#445a80" /></svg>
                </button>
                <button aria-label="Close" className={`${TITLE_BUTTON} w-[59px] rounded-br-md border-l-0`}>
                    <svg viewBox="0 0 18 16" className="h-4 w-[18px]"><path d="M2 1.500h4l3 3.500 3-3.500h4L11.500 8l4.500 6.500h-4L9 11l-3 3.500H2L6.500 8z" fill="#fff" stroke="#445a80" /></svg>
                </button>
            </div>
        </div>
        <RemoteSession />
    </div>
)

const Taskbar = () => (
    <div className="flex h-12 shrink-0 items-center border-t border-[#0b1a3d] bg-[linear-gradient(to_right,#1a3266_0,#1d3870_70px,#22428c_100px,#244690_800px,#2d549c_1600px,#1c3b70_1640px,#26467f)] text-white shadow-[inset_0_1px_0_#7f98c4]">
        <button aria-label="Start" className="ml-[11px]"><Orb className="h-11 w-11" /></button>
        <button aria-label="Internet Explorer" className="ml-[30px]">
            <svg viewBox="0 0 40 40" className="h-10 w-10">
                <path d="M21 4A16 16 0 1 0 36 26H27Q25 30 21 30 15 30 14 24H37Q38 4 21 4ZM14 17Q16 11 21 11 26 11 28 17Z" fill="#5ccdf8" stroke="#2298d8" />
                <path d="M37 9Q39 1 31 3 18 6 8 19-2 33 3 37 6 39 12 35" fill="none" stroke="#f5cd2a" strokeWidth="3" />
            </svg>
        </button>
        <button aria-label="Windows Explorer" className="ml-[30px]"><FolderIcon className="h-10 w-10" /></button>
        <button aria-label="Media Player" className="ml-[31px]">
            <svg viewBox="0 0 36 36" className="h-9 w-9">
                <path d="M22 4l10 2v24l-10 3Z" fill="#4a93c8" /><path d="M20 3l8 1v28l-8 2Z" fill="#6fb2dc" stroke="#9ed0ee" />
                <path d="M1 4l24-1v30L1 31Z" fill="#8cc4e4" stroke="#b6dcf0" />
                <circle cx="14" cy="18" r="10.500" fill="#f0742a" stroke="#f8b080" />
                <path d="M10 11L21 18L10 25Z" fill="#fff" />
            </svg>
        </button>
        <button aria-label="Chrome" className="ml-[33px]">
            <svg viewBox="0 0 60 60" className="h-10 w-10"><ChromeDisc /></svg>
        </button>
        <button aria-label="Remote Desktop Connection" className="ml-4 flex h-[46px] w-[62px] items-center justify-center rounded-xs border border-[#a9b8d4] bg-linear-to-br from-[#9cadcc] via-[#4f6ba4] to-[#3a5a9c]">
            <RdpIcon className="h-10 w-10" />
        </button>
        <span className="h-[46px] w-1 rounded-r-xs border border-l-0 border-[#a9b8d4]" />
        <span className="flex-1" />
        <div className="flex items-center gap-[10px]">
            <svg viewBox="0 0 10 6" className="mr-[7px] h-[6px] w-[10px]"><path d="M0 6L5 0L10 6Z" fill="#fff" /></svg>
            <svg viewBox="0 0 20 20" className="h-5 w-5">
                <path d="M2 1v18h2v-8q4-2 7 0h7V5q-4 1-7-1-4-2-7-1V1Z" fill="#fff" />
                <circle cx="14" cy="14" r="5.500" fill="#d8201c" /><path d="M11.500 11.500l5 5M16.500 11.500l-5 5" stroke="#fff" strokeWidth="1.500" />
            </svg>
            <svg viewBox="0 0 20 20" className="h-5 w-5">
                <path d="M2 4h2V2h5v2h2v15H2Z" fill="none" stroke="#fff" strokeWidth="2" /><path d="M4 6h5v11H4z" fill="#e8ecf4" />
                <path d="M12 6h7v4q-1 3-3 3v6h-1v-6q-3 0-3-3ZM13 2h2v4h-2zM17 2h2v4h-2z" fill="#fff" />
            </svg>
            <svg viewBox="0 0 20 20" className="h-5 w-5">
                <path d="M6 6h13v9H6z" fill="#2b4170" stroke="#fff" strokeWidth="2" /><path d="M8 18h9v1.500H8zM11 15h3v3h-3z" fill="#fff" />
                <path d="M1 1h5v7H1z" fill="#2b4170" stroke="#fff" strokeWidth="1.500" /><path d="M3 8v11" stroke="#fff" strokeWidth="2" />
            </svg>
            <svg viewBox="0 0 20 20" className="h-5 w-5">
                <path d="M1 6h3l7-5v18l-7-5H1z" fill="#fff" stroke="#334" />
                <circle cx="14" cy="14" r="4.500" fill="#d8201c" stroke="#fff" /><path d="M11 11l6 6" stroke="#fff" strokeWidth="1.500" />
            </svg>
        </div>
        <div className="w-[112px] pl-2 text-center text-sm leading-[22px]">09:50<br />10/08/2023</div>
        <button aria-label="Show desktop" className="h-full w-[14px] border border-[#8ba0c8] bg-linear-to-b from-[#6f86b4] via-[#1d3870] to-[#2a4c94]" />
    </div>
)

const Wallpaper = () => (
    <svg viewBox="0 0 1920 1032" preserveAspectRatio="none" className="absolute inset-0 h-full w-full">
        <defs>
            <linearGradient id="deep" x1="0" x2="1" y1="0" y2="0">
                <stop offset="0" stopColor="#0036b2" />
                <stop offset=".5" stopColor="#0038b6" />
                <stop offset="1" stopColor="#0344c6" />
            </linearGradient>
            <radialGradient id="glow" cx=".82" cy="0" r=".34">
                <stop offset="0" stopColor="#3580f0" />
                <stop offset=".5" stopColor="#1a62de" stopOpacity=".8" />
                <stop offset="1" stopColor="#0344c6" stopOpacity="0" />
            </radialGradient>
            <filter id="haze"><feGaussianBlur stdDeviation="12" /></filter>
        </defs>
        <rect width="1920" height="1032" fill="url(#deep)" />
        <rect width="1920" height="1032" fill="url(#glow)" />
        <g filter="url(#haze)" fill="none">
            <path d="M-20 540Q160 690 520 900" stroke="#0a58d4" strokeWidth="26" opacity=".6" />
            <path d="M-20 132Q140 140 280 190" stroke="#0a50cc" strokeWidth="14" opacity=".5" />
            <path d="M1660 760Q1800 660 1960 500" stroke="#1766e0" strokeWidth="30" opacity=".35" />
            <path d="M900 1060Q1500 940 1960 1000" stroke="#0a5ad8" strokeWidth="60" opacity=".4" />
        </g>
    </svg>
)

const App = () => (
    <div className="flex h-screen w-full flex-col overflow-hidden font-['Open_Sans','Noto_Sans',sans-serif]">
        <div className="relative min-h-0 flex-1">
            <Wallpaper />
            <div className="relative flex w-[94px] flex-col pt-[7px]">
                {desktopIcons.map(({ label, icon }) => (
                    <a key={label} href="#" className="flex h-[129px] flex-col items-center gap-1 text-center text-sm leading-5 text-white [text-shadow:1px_1px_2px_#000]">
                        <svg viewBox="0 0 60 60" className="h-[60px] w-[60px] shrink-0">{icon}</svg>
                        <span className="w-[88px]">{label}</span>
                    </a>
                ))}
            </div>
            <RemoteWindow />
            <svg viewBox="0 0 14 22" className="pointer-events-none absolute top-[540px] left-[960px] h-[22px] w-[14px]">
                <path d="M1 1V17L5 13.500L8 20L11 19L8 12.500H13Z" fill="#fff" stroke="#222" />
            </svg>
        </div>
        <Taskbar />
    </div>
)

export default App
